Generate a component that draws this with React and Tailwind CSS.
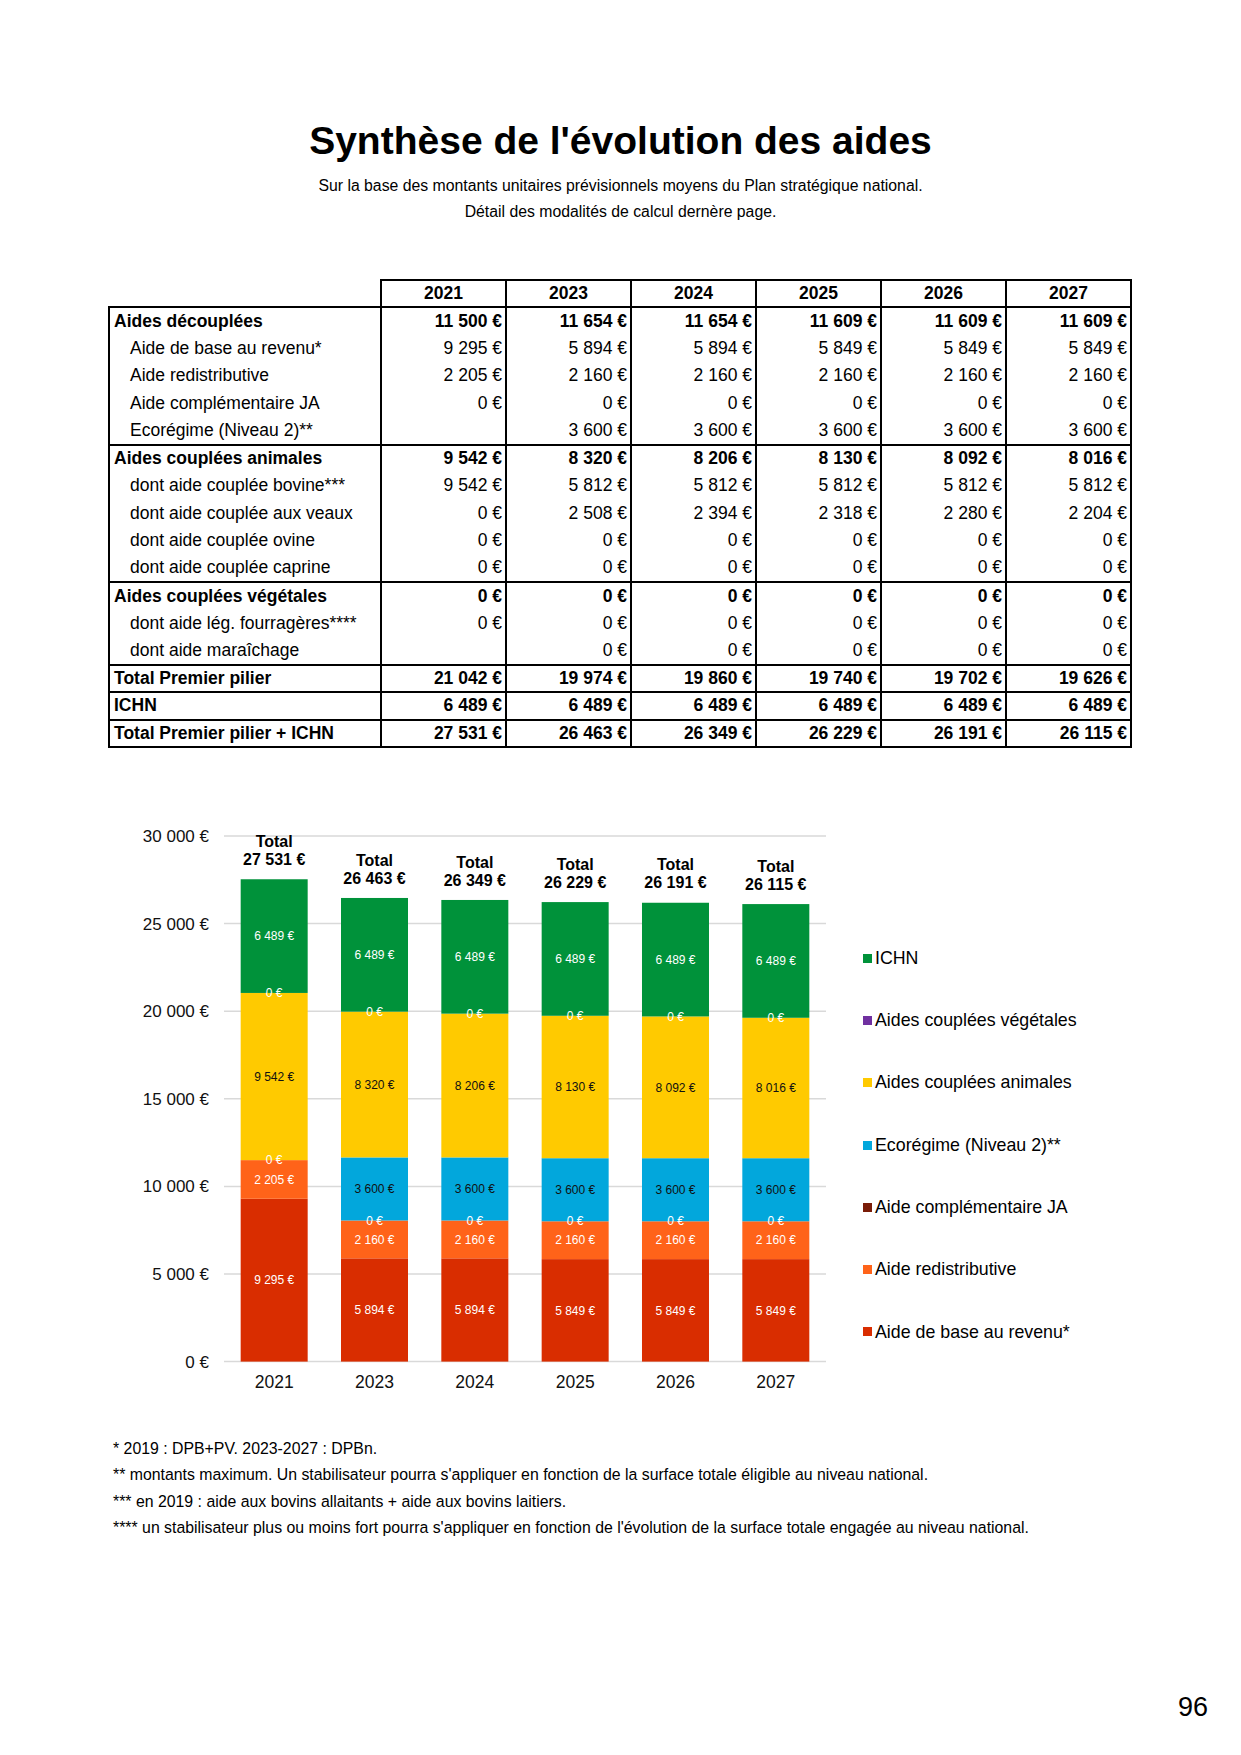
const YEARS = ["2021", "2023", "2024", "2025", "2026", "2027"];

const z6 = ["0 €", "0 €", "0 €", "0 €", "0 €", "0 €"];

const ROWS = [
  { label: "Aides découplées", bold: true, group: true, v: ["11 500 €", "11 654 €", "11 654 €", "11 609 €", "11 609 €", "11 609 €"] },
  { label: "Aide de base au revenu*", v: ["9 295 €", "5 894 €", "5 894 €", "5 849 €", "5 849 €", "5 849 €"] },
  { label: "Aide redistributive", v: ["2 205 €", "2 160 €", "2 160 €", "2 160 €", "2 160 €", "2 160 €"] },
  { label: "Aide complémentaire JA", v: z6 },
  { label: "Ecorégime (Niveau 2)**", v: ["", "3 600 €", "3 600 €", "3 600 €", "3 600 €", "3 600 €"] },
  { label: "Aides couplées animales", bold: true, group: true, v: ["9 542 €", "8 320 €", "8 206 €", "8 130 €", "8 092 €", "8 016 €"] },
  { label: "dont aide couplée bovine***", v: ["9 542 €", "5 812 €", "5 812 €", "5 812 €", "5 812 €", "5 812 €"] },
  { label: "dont aide couplée aux veaux", v: ["0 €", "2 508 €", "2 394 €", "2 318 €", "2 280 €", "2 204 €"] },
  { label: "dont aide couplée ovine", v: z6 },
  { label: "dont aide couplée caprine", v: z6 },
  { label: "Aides couplées végétales", bold: true, group: true, v: z6 },
  { label: "dont aide lég. fourragères****", v: z6 },
  { label: "dont aide maraîchage", v: ["", "0 €", "0 €", "0 €", "0 €", "0 €"] },
  { label: "Total Premier pilier", bold: true, group: true, v: ["21 042 €", "19 974 €", "19 860 €", "19 740 €", "19 702 €", "19 626 €"] },
  { label: "ICHN", bold: true, group: true, v: ["6 489 €", "6 489 €", "6 489 €", "6 489 €", "6 489 €", "6 489 €"] },
  { label: "Total Premier pilier + ICHN", bold: true, group: true, v: ["27 531 €", "26 463 €", "26 349 €", "26 229 €", "26 191 €", "26 115 €"] },
];

const C = {
  base: "#d92d00",
  redis: "#ff6319",
  ja: "#7a1c08",
  eco: "#02a7dc",
  anim: "#ffca00",
  veg: "#7030a0",
  ichn: "#00923a",
};

// bottom -> top
const BARS = [
  { year: "2021", total: "27 531 €", s: [9295, 2205, 0, null, 9542, 0, 6489] },
  { year: "2023", total: "26 463 €", s: [5894, 2160, 0, 3600, 8320, 0, 6489] },
  { year: "2024", total: "26 349 €", s: [5894, 2160, 0, 3600, 8206, 0, 6489] },
  { year: "2025", total: "26 229 €", s: [5849, 2160, 0, 3600, 8130, 0, 6489] },
  { year: "2026", total: "26 191 €", s: [5849, 2160, 0, 3600, 8092, 0, 6489] },
  { year: "2027", total: "26 115 €", s: [5849, 2160, 0, 3600, 8016, 0, 6489] },
];
const SEG = [
  { c: C.base, t: "#fff" },
  { c: C.redis, t: "#fff" },
  { c: C.ja, t: "#fff" },
  { c: C.eco, t: "#111" },
  { c: C.anim, t: "#111" },
  { c: C.veg, t: "#fff" },
  { c: C.ichn, t: "#fff" },
];

const LEGEND = [
  ["ICHN", C.ichn],
  ["Aides couplées végétales", C.veg],
  ["Aides couplées animales", C.anim],
  ["Ecorégime (Niveau 2)**", C.eco],
  ["Aide complémentaire JA", C.ja],
  ["Aide redistributive", C.redis],
  ["Aide de base au revenu*", C.base],
];

const fmt = (n) => n.toString().replace(/\B(?=(\d{3})+(?!\d))/g, " ") + " €";

const Y0 = 1361.6;
const K = 525.6 / 30000;
const yOf = (v) => Y0 - v * K;

function Chart() {
  const bw = 67;
  return (
    <svg width="760" height="600" viewBox="100 815 760 600" className="shrink-0">
      {[0, 5000, 10000, 15000, 20000, 25000, 30000].map((v) => (
        <g key={v}>
          <line x1="224" x2="826" y1={yOf(v)} y2={yOf(v)} stroke="#d9d9d9" strokeWidth="1.5" />
          <text x="209" y={yOf(v) + 6} textAnchor="end" fontSize="17" fill="#111">
            {v === 0 ? "0 €" : fmt(v)}
          </text>
        </g>
      ))}
      {BARS.map((b, i) => {
        const cx = 224 + 50.17 + i * 100.33;
        let acc = 0;
        const parts = b.s.map((v, k) => {
          if (v === null) return null;
          const y1 = yOf(acc);
          const y2 = yOf(acc + v);
          acc += v;
          return { k, v, y1, y2 };
        });
        const top = yOf(acc);
        return (
          <g key={b.year}>
            {parts.map((p) =>
              p && p.v > 0 ? (
                <rect key={p.k} x={cx - bw / 2} y={p.y2} width={bw} height={p.y1 - p.y2} fill={SEG[p.k].c} />
              ) : null
            )}
            {parts.map((p) =>
              p ? (
                <text
                  key={"t" + p.k}
                  x={cx}
                  y={(p.y1 + p.y2) / 2 + 4.2}
                  textAnchor="middle"
                  fontSize="12"
                  fill={SEG[p.k].t}
                >
                  {fmt(p.v)}
                </text>
              ) : null
            )}
            <text x={cx} y={top - 38 + 5.6} textAnchor="middle" fontSize="16" fontWeight="700" fill="#000">
              Total
            </text>
            <text x={cx} y={top - 20 + 5.6} textAnchor="middle" fontSize="16" fontWeight="700" fill="#000">
              {b.total}
            </text>
            <text x={cx} y={1388} textAnchor="middle" fontSize="17.5" fill="#111">
              {b.year}
            </text>
          </g>
        );
      })}
    </svg>
  );
}

export default function App() {
  return (
    <div className="w-[1241px] h-[1755px] bg-white text-black flex flex-col font-['Liberation_Sans',Arial,sans-serif]">
      <h1 className="mt-[119px] text-center text-[39px] leading-[44px] font-bold">Synthèse de l'évolution des aides</h1>
      <div className="mt-[10px] text-center text-[15.8px] leading-[26px]">
        <p>Sur la base des montants unitaires prévisionnels moyens du Plan stratégique national.</p>
        <p>Détail des modalités de calcul dernère page.</p>
      </div>

      <table className="mt-[54px] ml-[108px] table-fixed border-collapse text-[17.5px] leading-none w-[1022px]">
        <colgroup>
          <col className="w-[272px]" />
          {YEARS.map((y) => (
            <col key={y} className="w-[125px]" />
          ))}
        </colgroup>
        <thead>
          <tr className="h-[27px]">
            <th className="p-0"></th>
            {YEARS.map((y) => (
              <th key={y} className="p-0 border-2 border-black text-center font-bold">
                {y}
              </th>
            ))}
          </tr>
        </thead>
        <tbody>
          {ROWS.map((r, i) => {
            const bt = r.group ? "border-t-2" : "";
            const bb = i === ROWS.length - 1 ? "border-b-2" : "";
            return (
              <tr key={r.label} className="h-[27.5px]">
                <td
                  className={`p-0 border-x-2 border-black whitespace-nowrap ${bt} ${bb} ${
                    r.bold ? "font-bold pl-[4px]" : "pl-[20px]"
                  }`}
                >
                  {r.label}
                </td>
                {r.v.map((v, j) => (
                  <td
                    key={j}
                    className={`p-0 pr-[3px] border-x-2 border-black text-right whitespace-nowrap ${bt} ${bb} ${
                      r.bold ? "font-bold" : ""
                    }`}
                  >
                    {v}
                  </td>
                ))}
              </tr>
            );
          })}
        </tbody>
      </table>

      <div className="mt-[67px] flex">
        <div className="pl-[100px]">
          <Chart />
        </div>
        <div className="pt-[112px] pl-[3px] flex flex-col">
          {LEGEND.map(([t, c]) => (
            <div key={t} className="h-[62.3px] flex items-center gap-[3px] text-[17.8px]">
              <span className="w-[9px] h-[9px]" style={{ background: c }}></span>
              <span>{t}</span>
            </div>
          ))}
        </div>
      </div>

      <div className="mt-[21px] pl-[113px] text-[15.85px] leading-[26.3px]">
        <p>* 2019 : DPB+PV. 2023-2027 : DPBn.</p>
        <p>** montants maximum. Un stabilisateur pourra s'appliquer en fonction de la surface totale éligible au niveau national.</p>
        <p>*** en 2019 : aide aux bovins allaitants + aide aux bovins laitiers.</p>
        <p>**** un stabilisateur plus ou moins fort pourra s'appliquer en fonction de l'évolution de la surface totale engagée au niveau national.</p>
      </div>

      <div className="mt-auto pb-[33px] pr-[33px] text-right text-[27px] leading-[30px]">96</div>
    </div>
  );
}
